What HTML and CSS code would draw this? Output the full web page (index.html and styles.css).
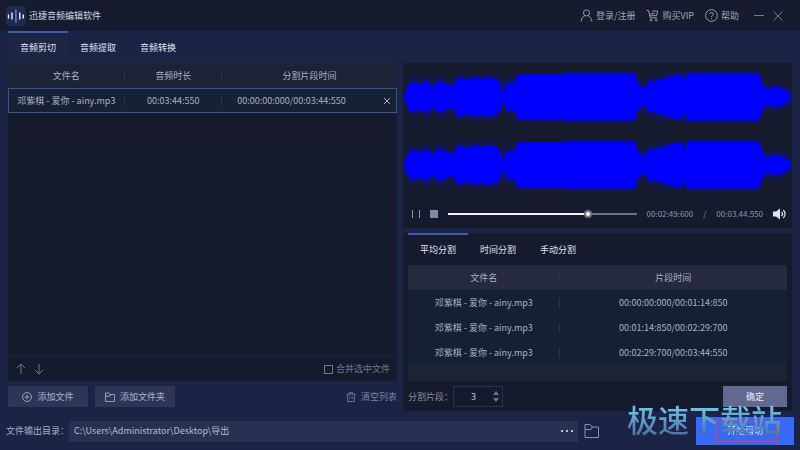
FILE: index.html
```html
<!DOCTYPE html>
<html lang="zh-CN">
<head>
<meta charset="utf-8">
<meta name="viewport" content="width=device-width, initial-scale=1.0">
<title>迅捷音频编辑软件</title>
<link rel="stylesheet" href="styles.css">
</head>
<body>
<header class="titlebar">
  <svg class="logo" viewBox="0 0 20 20" width="20" height="20">
    <rect width="20" height="20" rx="4" fill="#202a4c"/>
    <g stroke-width="1.4" stroke-linecap="round">
      <path d="M2.500 9v3M6 7v6M13.800 7v6M17.300 9v3" stroke="#e6edfa"/>
      <path d="M9.900 4v12" stroke="#5c86ff"/>
    </g>
  </svg>
  <h1>迅捷音频编辑软件</h1>
  <nav class="top-links">
    <a href="#login"><svg class="icon" viewBox="0 0 14 14" width="13" height="13"><circle cx="7" cy="4.2" r="3.3"/><path d="M1.2 13.500c.3-3.300 2-5.500 4-6.200M12.800 13.500c-.3-3.300-2-5.500-4-6.200"/></svg>登录/注册</a>
    <a href="#vip"><svg class="icon" viewBox="0 0 14 14" width="13" height="13"><path d="M.5 1.500h2.200l1.800 8h7.500M4.800 5h4.700M6.500 2.200h6l-1 5H4.200"/><circle cx="5.400" cy="12" r=".9"/><circle cx="11" cy="12" r=".9"/></svg>购买VIP</a>
    <a href="#help"><svg class="icon" viewBox="0 0 14 14" width="13" height="13"><circle cx="7" cy="7" r="6.300"/><path d="M5 5.600c0-2.600 4-2.600 4 0C9 7 7 6.900 7 8.600M7 9.800v1.100"/></svg>帮助</a>
  </nav>
  <button class="win-btn" aria-label="最小化"><svg class="icon" viewBox="0 0 12 12" width="12" height="12"><path d="M1 5.500h10"/></svg></button>
  <button class="win-btn" aria-label="关闭"><svg class="icon" viewBox="0 0 12 12" width="12" height="12"><path d="M1.500 1.500l9 9M10.500 1.500l-9 9"/></svg></button>
</header>

<nav class="tabs main-tabs">
  <button class="tab active">音频剪切</button>
  <button class="tab">音频提取</button>
  <button class="tab">音频转换</button>
</nav>

<main class="workspace">
  <section class="left">
    <div class="panel file-panel">
      <table class="file-table">
        <colgroup><col class="c-name"><col class="c-length"><col><col class="c-close"></colgroup>
        <thead>
          <tr><th>文件名</th><th>音频时长</th><th colspan="2">分割片段时间</th></tr>
        </thead>
        <tbody>
          <tr>
            <td>邓紫棋 - 爱你 - ainy.mp3</td>
            <td>00:03:44:550</td>
            <td>00:00:00:000/00:03:44:550</td>
            <td><button class="plain" aria-label="移除"><svg class="icon" viewBox="0 0 8 8" width="8" height="8"><path d="M1 1l6 6M7 1l-6 6"/></svg></button></td>
          </tr>
        </tbody>
      </table>
      <div class="list-footer">
        <button class="plain" aria-label="上移"><svg class="icon" viewBox="0 0 10 12" width="10" height="12"><path d="M5 11V1M1 5l4-4 4 4"/></svg></button>
        <button class="plain" aria-label="下移"><svg class="icon" viewBox="0 0 10 12" width="10" height="12"><path d="M5 1v10M1 7l4 4 4-4"/></svg></button>
        <label class="merge"><input type="checkbox">合并选中文件</label>
      </div>
    </div>
    <div class="file-actions">
      <button class="btn"><svg class="icon" viewBox="0 0 12 12" width="10" height="10"><circle cx="6" cy="6" r="5.400"/><path d="M6 3.200v5.600M3.200 6h5.600"/></svg>添加文件</button>
      <button class="btn"><svg class="icon" viewBox="0 0 12 12" width="10" height="10"><path d="M.6 11.400V1.200h4l1.400 1.800h5.400v8.400zM.6 5H6l1-2"/></svg>添加文件夹</button>
      <button class="plain clear"><svg class="icon" viewBox="0 0 12 12" width="10" height="10"><path d="M.6 2.600h10.800M4 2.600V.7h4v1.900M1.900 2.600v8.800h8.200V2.600M4.600 5.500v3M7.400 5.500v3"/></svg>清空列表</button>
    </div>
  </section>

  <section class="right">
    <div class="panel player">
      <svg class="waveform" viewBox="403 0 389 136" preserveAspectRatio="none">
        <path class="wave-edge" id="edge"/>
        <path class="wave-core" id="core"/>
      </svg>
      <div class="controls">
        <button class="plain" aria-label="暂停"><svg viewBox="0 0 8 8" width="8" height="8"><path d="M.5 0v8M7.500 0v8" stroke="#8d93a8"/></svg></button>
        <button class="plain" aria-label="停止"><svg viewBox="0 0 8 8" width="8" height="8"><path d="M0 0h8v8H0z" fill="#8288a6"/></svg></button>
        <input class="seek" type="range" min="0" max="224550" value="169600" aria-label="播放进度">
        <span>00:02:49:600</span><span>/</span><span>00:03.44.550</span>
        <button class="plain" aria-label="音量"><svg viewBox="0 0 13 12" width="13" height="12"><path d="M0 3.500h3L7 .5v11L3 8.500H0z" fill="#dde5f0"/><path d="M8.500 3.800c1.200 1.200 1.200 3.200 0 4.400M10.300 2c2.300 2.200 2.300 5.800 0 8" fill="none" stroke="#dde5f0" stroke-width="1.200"/></svg></button>
      </div>
    </div>

    <div class="panel split-panel">
      <nav class="tabs">
        <button class="tab active">平均分割</button>
        <button class="tab">时间分割</button>
        <button class="tab">手动分割</button>
      </nav>
      <div class="split-list">
        <table class="split-table">
          <colgroup><col class="c-split-name"><col></colgroup>
          <thead><tr><th>文件名</th><th>片段时间</th></tr></thead>
          <tbody>
            <tr><td>邓紫棋 - 爱你 - ainy.mp3</td><td>00:00:00:000/00:01:14:850</td></tr>
            <tr><td>邓紫棋 - 爱你 - ainy.mp3</td><td>00:01:14:850/00:02:29:700</td></tr>
            <tr><td>邓紫棋 - 爱你 - ainy.mp3</td><td>00:02:29:700/00:03:44:550</td></tr>
          </tbody>
        </table>
      </div>
      <div class="split-actions">
        <label for="parts">分割片段：</label>
        <div class="stepper">
          <input id="parts" type="text" inputmode="numeric" value="3">
          <div class="steps">
            <button class="plain" aria-label="增加"><svg viewBox="0 0 6 4" width="6" height="4"><path d="M0 4l3-4 3 4z" fill="#6f7791"/></svg></button>
            <button class="plain" aria-label="减少"><svg viewBox="0 0 6 4" width="6" height="4"><path d="M0 0l3 4 3-4z" fill="#6f7791"/></svg></button>
          </div>
        </div>
        <button class="btn confirm">确定</button>
      </div>
    </div>
  </section>
</main>

<footer class="output">
  <label for="path">文件输出目录：</label>
  <div class="path-box">
    <input id="path" type="text" value="C:\Users\Administrator\Desktop\导出">
    <button class="plain" aria-label="浏览"><svg viewBox="0 0 12 2" width="12" height="2"><path d="M0 0h2v2H0zM5 0h2v2H5zM10 0h2v2h-2z" fill="#bcc3d8"/></svg></button>
  </div>
  <button class="plain folder" aria-label="打开文件夹"><svg class="icon" viewBox="0 0 16 16" width="16" height="16"><path d="M1 14.500v-13h5l2 2.500h6.500v10.500zM1 6.500h6l1.500-2.500"/></svg></button>
  <button class="start">开始剪切<span class="marker"></span></button>
  <span class="watermark">极速下载站</span>
</footer>
<script src="wave.js"></script>
</body>
</html>
```
FILE: styles.css
```css
* {
  box-sizing: border-box;
}
body {
  margin: 0;
  min-height: 100vh;
  display: flex;
  flex-direction: column;
  background: #1b2444;
  color: #a9b0c4;
  font-family: "Noto Sans CJK SC", "Noto Sans", sans-serif;
  font-size: 9px;
  line-height: 12px;
}
button, input {
  font: inherit;
  color: inherit;
  margin: 0;
}
button {
  padding: 0;
  border: 0;
  cursor: pointer;
}
svg {
  display: block;
  flex: none;
}
.icon {
  fill: none;
  stroke: currentColor;
  stroke-width: 1;
}
.plain {
  background: none;
}

/* title bar */
.titlebar {
  display: flex;
  align-items: center;
  height: 31px;
  padding: 0 16px 0 6px;
  background: #161b2d;
}
h1 {
  margin: 0 auto 0 3px;
  font-size: 9px;
  font-weight: 400;
  color: #d3d9e6;
}
.top-links {
  display: flex;
  gap: 11px;
  margin-right: 14px;
}
.top-links a {
  display: flex;
  align-items: center;
  gap: 3px;
  color: #a0a7bb;
  text-decoration: none;
}
.win-btn {
  background: none;
  color: #747c93;
}
.win-btn + .win-btn {
  margin-left: 7px;
}

/* tabs */
.tabs {
  display: flex;
  padding-left: 8px;
}
.tab {
  width: 60px;
  height: 32px;
  background: none;
  border-top: 2px solid transparent;
  color: #dfe4f0;
}
.tab.active {
  border-top-color: #3f5cb5;
}
.main-tabs .active {
  background: #1f2545;
}

.workspace {
  flex: 1;
  display: grid;
  grid-template-columns: 1fr 1fr;
  gap: 6px;
  padding: 0 8px;
}
.left, .right {
  display: flex;
  flex-direction: column;
  gap: 5px;
}
.panel {
  background: #151b2d;
}

/* file list */
.file-panel {
  flex: 1;
  display: flex;
  flex-direction: column;
}
table {
  width: 100%;
  table-layout: fixed;
  border-collapse: collapse;
}
th, td {
  height: 25px;
  padding: 0;
  font-weight: 400;
  text-align: center;
  background: linear-gradient(#2b3247, #2b3247) right center / 1px 10px no-repeat;
}
th:last-child, td:last-child, .file-table td:nth-child(3) {
  background: none;
}
.c-name {
  width: 30%;
}
.c-length {
  width: 25%;
}
.c-close {
  width: 20px;
}
.file-table thead {
  background: #1c2336;
}
.file-table tbody tr {
  outline: 1px solid #345794;
  outline-offset: -1px;
  background: #172035;
}
.file-table td:nth-child(3) {
  padding-right: 16px;
}
.file-table td .plain {
  display: block;
  margin: auto;
}
.list-footer {
  display: flex;
  align-items: center;
  gap: 8px;
  height: 25px;
  margin-top: auto;
  padding: 0 7px 0 8px;
  border-top: 1px solid #1d2437;
  color: #70788e;
}
.merge {
  display: flex;
  align-items: center;
  gap: 3px;
  margin-left: auto;
}
.merge input {
  appearance: none;
  width: 9px;
  height: 9px;
  border: 1px solid #70788e;
}
.file-actions {
  display: flex;
  gap: 7px;
  margin-bottom: 5px;
}
.btn {
  display: flex;
  align-items: center;
  justify-content: center;
  gap: 5px;
  width: 80px;
  height: 21px;
  background: #2e3656;
  color: #a9b2ca;
}
.clear {
  display: flex;
  align-items: center;
  gap: 5px;
  margin-left: auto;
  color: #7b83a0;
}

/* player */
.waveform {
  width: 100%;
  height: 136px;
}
.wave-core {
  fill: #0000ff;
}
.wave-edge {
  fill: #0000ff;
  opacity: 0.4;
}
.controls {
  display: flex;
  align-items: center;
  gap: 10px;
  height: 29px;
  padding: 0 6px 0 9px;
  color: #8e95a8;
  font-size: 8px;
}
.controls span {
  flex: none;
}
.seek {
  --track: linear-gradient(90deg, #f1f4fa 75%, #6d7384 75%);
  appearance: none;
  flex: 1;
  min-width: 0;
  height: 8px;
  background: var(--track) center / 100% 2px no-repeat;
}
.seek::-webkit-slider-thumb {
  appearance: none;
  width: 8px;
  height: 8px;
  border: 2px solid #6e7587;
  border-radius: 50%;
  background: #fff;
}

/* split settings */
.split-panel {
  padding: 0 5px 4px;
}
.split-panel .tabs {
  padding: 0;
}
.split-list {
  height: 116px;
  background: #1d2235;
}
.c-split-name {
  width: 40%;
}
.split-table thead {
  background: #262a3e;
}
.split-table tbody {
  background: #162034;
}
.split-actions {
  display: flex;
  align-items: center;
  margin-top: 5px;
  color: #858ca0;
}
.stepper {
  display: flex;
  width: 50px;
  height: 21px;
  border: 1px solid #2c3247;
}
.stepper input {
  flex: 1;
  min-width: 0;
  padding: 0;
  border: 0;
  background: none;
  color: #c3c9d8;
  text-align: center;
}
.steps {
  display: flex;
  flex-direction: column;
  justify-content: space-evenly;
  padding-right: 3px;
}
.confirm {
  width: 64px;
  margin-left: auto;
  background: #62688f;
  color: #e9ecf5;
}

/* output row */
.output {
  position: relative;
  display: flex;
  align-items: center;
  padding: 5px 6px;
}
.path-box {
  flex: 1;
  display: flex;
  align-items: center;
  height: 21px;
  padding: 0 5px;
  margin-right: 6px;
  background: #2a3150;
  color: #b5bdd1;
}
.path-box input {
  flex: 1;
  min-width: 0;
  padding: 0;
  border: 0;
  background: none;
}
.folder {
  color: #8b93ad;
}
.start {
  position: relative;
  width: 98px;
  height: 28px;
  margin-left: 96px;
  background: #3868f6;
  color: #dbe5ff;
}
.marker {
  position: absolute;
  top: 4px;
  left: 20px;
  width: 61px;
  height: 21px;
  border: 1px solid #d8405f;
}
.watermark {
  position: absolute;
  right: 18px;
  bottom: 13px;
  font-size: 31px;
  font-weight: 500;
  line-height: 36px;
  background: linear-gradient(#6fbfe6 20%, #4f78a8 90%);
  background-clip: text;
  color: transparent;
  pointer-events: none;
}
```
FILE: wave.js
```js
// loudness envelope: [position, amplitude]
const envelope = [
  [404, 4], [407, 8], [409, 14], [414, 15], [418, 13], [424, 14], [427, 18], [430, 11],
  [432, 9], [434, 14], [440, 16], [446, 13], [452, 11], [455, 15], [457, 19], [463, 19],
  [466, 16], [470, 19], [478, 20], [480, 17], [486, 20], [492, 19], [498, 17], [501, 9],
  [503, 5], [505, 12], [507, 15], [509, 13], [514, 15], [516, 21], [520, 23], [560, 23],
  [561, 21], [564, 24], [634, 24], [637, 15], [641, 10], [645, 9], [649, 17], [652, 15],
  [656, 16], [660, 18], [664, 18], [670, 21], [676, 22], [681, 23], [684, 16], [686, 24],
  [757, 24], [761, 17], [764, 9], [768, 8], [772, 10], [780, 9], [785, 7], [788, 5], [791, 1]
];

function amplitude(x) {
  for (let i = 1; i < envelope.length; i++) {
    const [x1, a1] = envelope[i];
    const [x0, a0] = envelope[i - 1];
    if (x <= x1) return a0 + (a1 - a0) * (x - x0) / (x1 - x0);
  }
  return 0;
}

function wavePath(spike) {
  let d = "";
  for (const mid of [34, 102]) {
    for (let x = 404; x < 791; x++) {
      const base = amplitude(x);
      const a = Math.min(24, base + (x % 5 < 2 ? spike : 0));
      d += `M${x} ${mid - a}h1v${a * 2}h-1z`;
    }
  }
  return d;
}

document.getElementById("core").setAttribute("d", wavePath(0));
document.getElementById("edge").setAttribute("d", wavePath(6));
```
